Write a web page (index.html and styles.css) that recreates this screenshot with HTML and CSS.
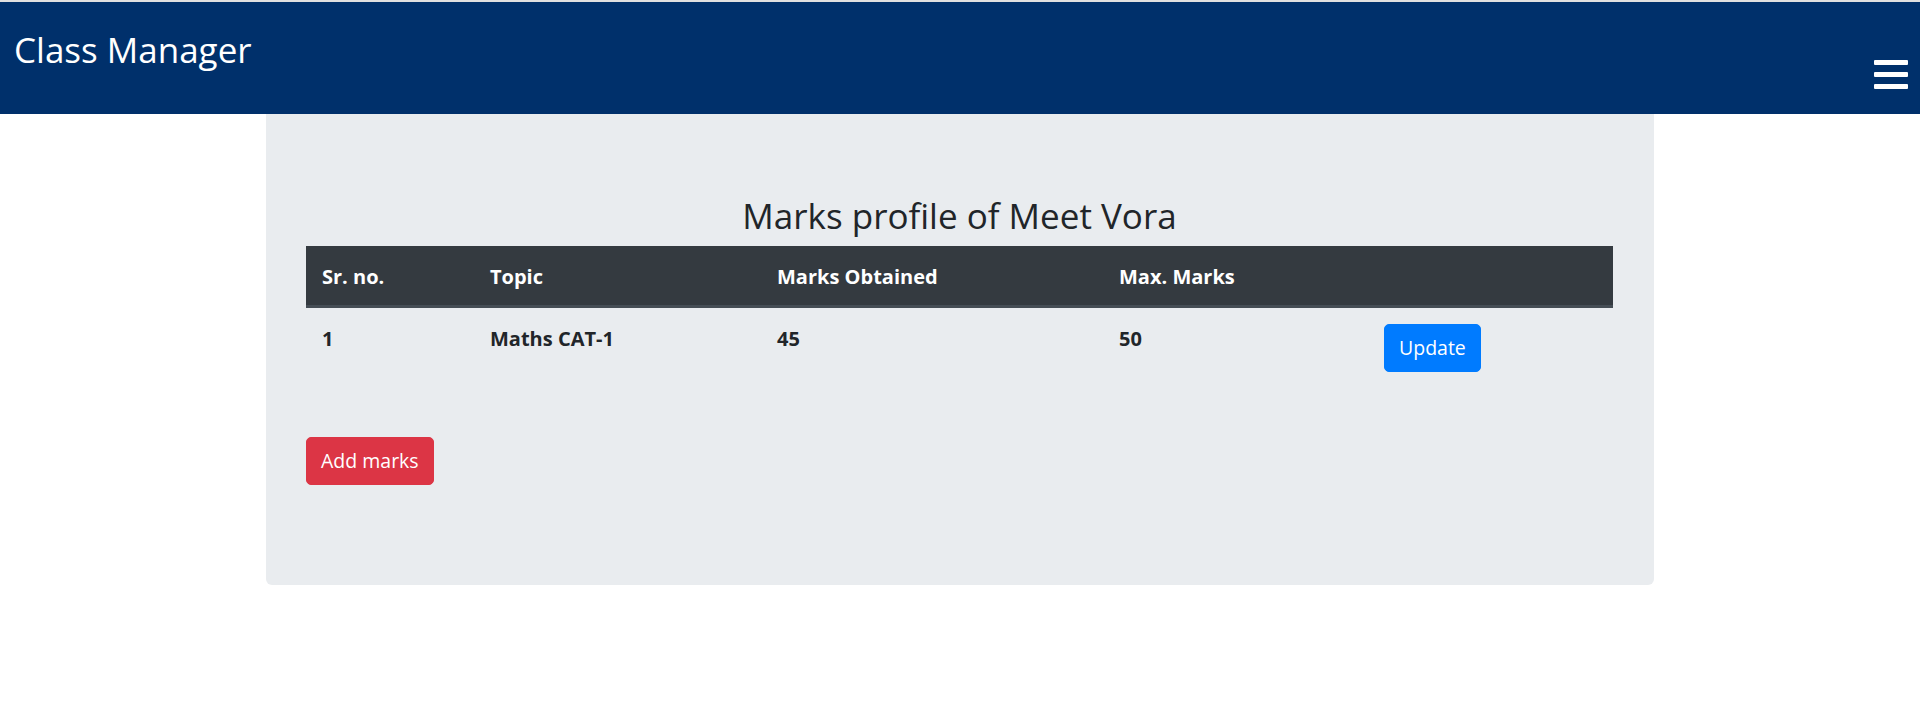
FILE: index.html
```html
<!DOCTYPE html>
<html>
<head>
<meta charset="utf-8">
<link rel="stylesheet" href="styles.css">
</head>
<body>
<header class="navbar">
  <div class="brand">Class Manager</div>
  <div class="toggler">
    <svg width="34" height="29" viewBox="0 0 34 29"><rect x="0" y="0" width="34" height="5" rx="1" fill="#fff"/><rect x="0" y="12" width="34" height="5" rx="1" fill="#fff"/><rect x="0" y="24" width="34" height="5" rx="1" fill="#fff"/></svg>
  </div>
</header>
<main class="jumbo">
  <h2 class="title">Marks profile of Meet Vora</h2>
  <table class="marks">
    <thead>
      <tr>
        <th class="c1">Sr. no.</th>
        <th class="c2">Topic</th>
        <th class="c3">Marks Obtained</th>
        <th class="c4">Max. Marks</th>
        <th class="c5"></th>
      </tr>
    </thead>
    <tbody>
      <tr>
        <td>1</td>
        <td>Maths CAT-1</td>
        <td>45</td>
        <td>50</td>
        <td><button class="btn btn-blue">Update</button></td>
      </tr>
    </tbody>
  </table>
  <div class="actions"><button class="btn btn-red">Add marks</button></div>
</main>
</body>
</html>
```
FILE: styles.css
```css
* { box-sizing: border-box; }
html, body { margin: 0; padding: 0; background: #fff; }
body {
  font-family: "Open Sans", "Noto Sans", sans-serif;
  font-size: 20px;
  line-height: 1.5;
  color: #212529;
  border-top: 2px solid #e0e0e0;
}
.navbar {
  background: #00306b;
  height: 112px;
  display: flex;
  justify-content: space-between;
  align-items: flex-start;
  padding: 0 12px 0 14px;
}
.brand {
  color: #fff;
  font-size: 35px;
  line-height: 48px;
  margin-top: 24px;
  white-space: nowrap;
}
.toggler {
  margin-top: 58px;
  line-height: 0;
}
.jumbo {
  width: 1388px;
  margin: 0 0 0 266px;
  background: #e9ecef;
  border-radius: 0 0 6px 6px;
  padding: 74px 41px 100px 40px;
}
.title {
  margin: 0 0 10px;
  font-size: 35px;
  font-weight: 400;
  line-height: 48px;
  text-align: center;
  padding-top: 4px;
  height: 48px;
}
.marks {
  width: 1307px;
  table-layout: fixed;
  border-collapse: collapse;
  margin-bottom: 50px;
}
.marks th, .marks td {
  padding: 16px 16px 15px;
  text-align: left;
  vertical-align: top;
  font-weight: 700;
  line-height: 30px;
}
.marks thead th {
  background: #343a40;
  color: #fff;
  border-bottom: 3px solid #454d55;
  padding-top: 16px;
  padding-bottom: 13px;
}
.c1 { width: 168px; }
.c2 { width: 287px; }
.c3 { width: 342px; }
.c4 { width: 265px; }
.c5 { width: 245px; }
.btn {
  font-family: inherit;
  font-size: 19.5px;
  line-height: 30px;
  padding: 8px 14px 8px;
  border: 1px solid transparent;
  border-radius: 5px;
  color: #fff;
  cursor: pointer;
  display: inline-block;
}
.btn-blue { background: #007bff; border-color: #007bff; }
.btn-red { background: #dc3545; border-color: #dc3545; }
.actions { line-height: 0; }
```
